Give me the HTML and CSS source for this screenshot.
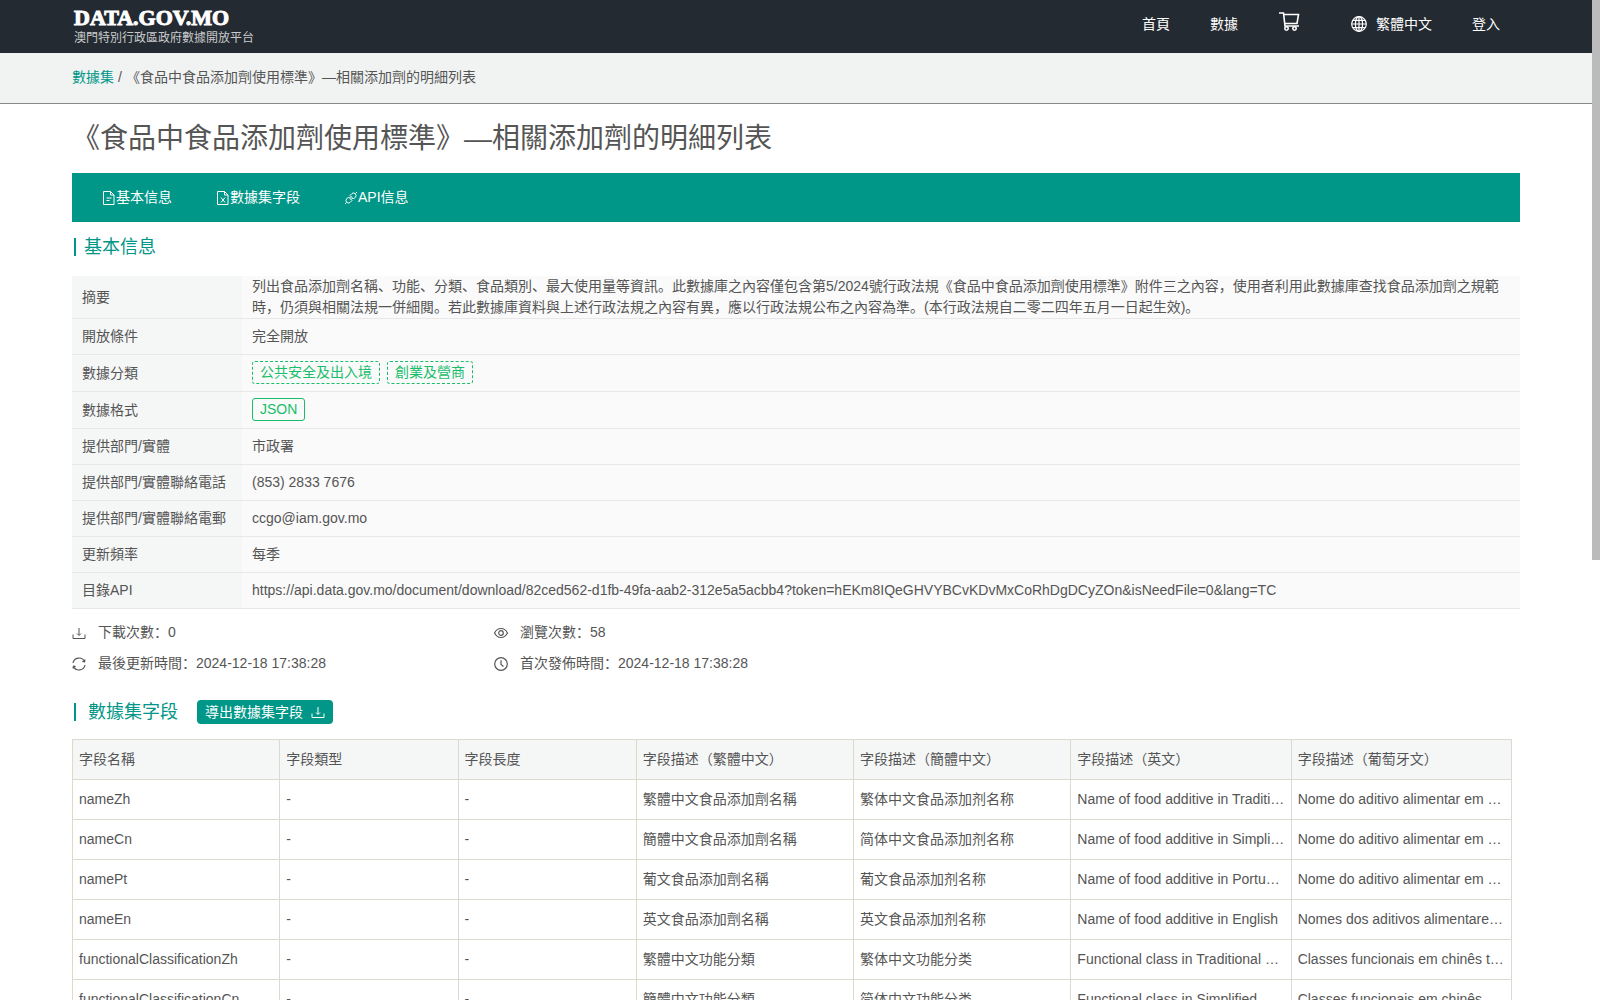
FILE: index.html
```
<!DOCTYPE html>
<html lang="zh">
<head>
    <meta charset="UTF-8">
    <meta name="viewport" content="width=device-width, initial-scale=1.0">
    <title>《食品中食品添加劑使用標準》—相關添加劑的明細列表</title>
    <link rel="stylesheet" href="styles.css">
</head>
<body>
    <header class="header">
        <a class="logo" href="#">
            <span class="logo-name">DATA.GOV.MO</span>
            <span class="logo-sub">澳門特別行政區政府數據開放平台</span>
        </a>
        <nav class="menu">
            <a href="#">首頁</a>
            <a href="#">數據</a>
            <a class="cart" href="#" aria-label="購物車">
                <svg width="24" height="24" viewBox="0 0 24 24" fill="none" stroke="currentColor" stroke-width="1.6">
                    <path d="M1 4h4.500l1.500 13h14M5.500 5.500h15l-1.500 9H6.800"/>
                    <circle cx="8.500" cy="19.500" r="1.700"/>
                    <circle cx="16.500" cy="19.500" r="1.700"/>
                </svg>
            </a>
            <a class="lang" href="#">
                <svg width="16" height="16" viewBox="0 0 16 16" fill="none" stroke="currentColor" stroke-width="1.2">
                    <circle cx="8" cy="8" r="7.300"/>
                    <ellipse cx="8" cy="8" rx="3.600" ry="7.300"/>
                    <path d="M8 .7v14.600M.7 8h14.600M1.800 4.300h12.400M1.800 11.700h12.400"/>
                </svg>
                繁體中文
            </a>
            <a href="#">登入</a>
        </nav>
    </header>

    <div class="breadcrumb">
        <a href="#">數據集</a>
        <span>/</span>
        <span>《食品中食品添加劑使用標準》—相關添加劑的明細列表</span>
    </div>

    <main class="container">
        <h1>《食品中食品添加劑使用標準》—相關添加劑的明細列表</h1>

        <nav class="tabs">
            <a href="#info">
                <svg width="14" height="14" viewBox="0 0 14 14" fill="none" stroke="currentColor">
                    <path d="M1.500 .5h7L12 4v9.500H1.500zM8.500.5V4H12M4.500 7h5M4.500 9.500h3"/>
                </svg>基本信息</a>
            <a href="#fields">
                <svg width="14" height="14" viewBox="0 0 14 14" fill="none" stroke="currentColor">
                    <path d="M1.500 .5h7L12 4v9.500H1.500zM8.500.5V4H12M5 6.500l4 5M9 6.500l-4 5"/>
                </svg>數據集字段</a>
            <a href="#api">
                <svg width="14" height="14" viewBox="0 0 14 14" fill="none" stroke="currentColor">
                    <path d="M6 4.500l2-2a2.500 2.500 0 0 1 3.500 3.500l-2 2zM4.500 6l3.500 3.500-2 2A2.500 2.500 0 0 1 2.500 8zM11.500 2.500l1.500-1.500M1 13l1.500-1.500M5.500 7l1.500-1.500M7 8.500L8.500 7"/>
                </svg>API信息</a>
        </nav>

        <h2 class="section-title" id="info">基本信息</h2>

        <table class="info">
            <tr>
                <th>摘要</th>
                <td>列出食品添加劑名稱、功能、分類、食品類別、最大使用量等資訊。此數據庫之內容僅包含第5/2024號行政法規《食品中食品添加劑使用標準》附件三之內容，使用者利用此數據庫查找食品添加劑之規範時，仍須與相關法規一併細閱。若此數據庫資料與上述行政法規之內容有異，應以行政法規公布之內容為準。(本行政法規自二零二四年五月一日起生效)。</td>
            </tr>
            <tr>
                <th>開放條件</th>
                <td>完全開放</td>
            </tr>
            <tr>
                <th>數據分類</th>
                <td>
                    <div class="tags">
                        <span class="tag dashed">公共安全及出入境</span>
                        <span class="tag dashed">創業及營商</span>
                    </div>
                </td>
            </tr>
            <tr>
                <th>數據格式</th>
                <td>
                    <div class="tags">
                        <span class="tag">JSON</span>
                    </div>
                </td>
            </tr>
            <tr>
                <th>提供部門/實體</th>
                <td>市政署</td>
            </tr>
            <tr>
                <th>提供部門/實體聯絡電話</th>
                <td>(853) 2833 7676</td>
            </tr>
            <tr>
                <th>提供部門/實體聯絡電郵</th>
                <td>ccgo@iam.gov.mo</td>
            </tr>
            <tr>
                <th>更新頻率</th>
                <td>每季</td>
            </tr>
            <tr>
                <th>目錄API</th>
                <td>https://api.data.gov.mo/document/download/82ced562-d1fb-49fa-aab2-312e5a5acbb4?token=hEKm8IQeGHVYBCvKDvMxCoRhDgDCyZOn&amp;isNeedFile=0&amp;lang=TC</td>
            </tr>
        </table>

        <div class="stats">
            <div class="stat">
                <svg width="14" height="14" viewBox="0 0 14 14" fill="none" stroke="currentColor">
                    <path d="M1 8.500v4h12v-4M7 2v7M5 7.500l2 2 2-2"/>
                </svg>
                <span>下載次數：0</span>
            </div>
            <div class="stat">
                <svg width="14" height="14" viewBox="0 0 14 14" fill="none" stroke="currentColor" stroke-width="1.2">
                    <path d="M.5 7C2 4 4.300 2.500 7 2.500S12 4 13.500 7C12 10 9.700 11.500 7 11.500S2 10 .5 7z"/>
                    <circle cx="7" cy="7" r="2.300"/>
                </svg>
                <span>瀏覽次數：58</span>
            </div>
            <div class="stat">
                <svg width="14" height="14" viewBox="0 0 14 14" fill="none" stroke="currentColor" stroke-width="1.2">
                    <path d="M1 6a6.100 6.100 0 0 1 11.500-1.500M13 8a6.100 6.100 0 0 1-11.500 1.500M13 2.500l-.5 2.300-2.200-.4M1 11.500l.5-2.300 2.200.4"/>
                </svg>
                <span>最後更新時間：2024-12-18 17:38:28</span>
            </div>
            <div class="stat">
                <svg width="14" height="14" viewBox="0 0 14 14" fill="none" stroke="currentColor" stroke-width="1.2">
                    <circle cx="7" cy="7" r="6.300"/>
                    <path d="M7 3.200v4.300l2.500 2"/>
                </svg>
                <span>首次發佈時間：2024-12-18 17:38:28</span>
            </div>
        </div>

        <div class="fields-head">
            <h2 class="section-title wide" id="fields">數據集字段</h2>
            <button class="export" type="button">
                導出數據集字段
                <svg width="14" height="14" viewBox="0 0 14 14" fill="none" stroke="currentColor">
                    <path d="M1 8.500v4h12v-4M7 2v7M5 7.500l2 2 2-2"/>
                </svg>
            </button>
        </div>

        <table class="fields">
            <colgroup>
                <col class="col-name">
                <col class="col-type">
                <col class="col-type">
                <col class="col-zh">
                <col class="col-zh">
                <col class="col-foreign">
                <col class="col-foreign">
            </colgroup>
            <thead>
                <tr>
                    <th>字段名稱</th>
                    <th>字段類型</th>
                    <th>字段長度</th>
                    <th>字段描述（繁體中文）</th>
                    <th>字段描述（簡體中文）</th>
                    <th>字段描述（英文）</th>
                    <th>字段描述（葡萄牙文）</th>
                </tr>
            </thead>
            <tbody>
                <tr>
                    <td>nameZh</td>
                    <td>-</td>
                    <td>-</td>
                    <td>繁體中文食品添加劑名稱</td>
                    <td>繁体中文食品添加剂名称</td>
                    <td>Name of food additive in Traditional Chinese</td>
                    <td>Nome do aditivo alimentar em chinês tradicional</td>
                </tr>
                <tr>
                    <td>nameCn</td>
                    <td>-</td>
                    <td>-</td>
                    <td>簡體中文食品添加劑名稱</td>
                    <td>简体中文食品添加剂名称</td>
                    <td>Name of food additive in Simplified Chinese</td>
                    <td>Nome do aditivo alimentar em chinês simplificado</td>
                </tr>
                <tr>
                    <td>namePt</td>
                    <td>-</td>
                    <td>-</td>
                    <td>葡文食品添加劑名稱</td>
                    <td>葡文食品添加剂名称</td>
                    <td>Name of food additive in Portuguese</td>
                    <td>Nome do aditivo alimentar em português</td>
                </tr>
                <tr>
                    <td>nameEn</td>
                    <td>-</td>
                    <td>-</td>
                    <td>英文食品添加劑名稱</td>
                    <td>英文食品添加剂名称</td>
                    <td>Name of food additive in English</td>
                    <td>Nomes dos aditivos alimentares em inglês</td>
                </tr>
                <tr>
                    <td>functionalClassificationZh</td>
                    <td>-</td>
                    <td>-</td>
                    <td>繁體中文功能分類</td>
                    <td>繁体中文功能分类</td>
                    <td>Functional class in Traditional Chinese</td>
                    <td>Classes funcionais em chinês tradicional</td>
                </tr>
                <tr>
                    <td>functionalClassificationCn</td>
                    <td>-</td>
                    <td>-</td>
                    <td>簡體中文功能分類</td>
                    <td>简体中文功能分类</td>
                    <td>Functional class in Simplified Chinese</td>
                    <td>Classes funcionais em chinês simplificado</td>
                </tr>
            </tbody>
        </table>
    </main>

    <div class="scrollbar"></div>
</body>
</html>
```

FILE: styles.css
```
* {
    box-sizing: border-box;
}
body {
    margin: 0;
    padding-right: 8px;
    height: 100vh;
    overflow: hidden;
    font-family: "Liberation Sans", "Noto Sans CJK SC", sans-serif;
    font-size: 14px;
    line-height: 21px;
    color: #555;
    background-color: #fff;
    text-spacing-trim: space-all;
}
a {
    color: inherit;
    text-decoration: none;
}
svg {
    flex-shrink: 0;
}

/* header */
.header {
    display: flex;
    justify-content: space-between;
    height: 53px;
    margin-right: -8px;
    padding: 0 80px 0 72px;
    background-color: #242a32;
    color: #fff;
}
.logo {
    display: flex;
    flex-direction: column;
    padding: 8px 2px 0;
}
.logo-name {
    font-family: "Liberation Serif", serif;
    font-size: 22px;
    font-weight: bold;
    line-height: 20px;
    -webkit-text-stroke: 1px #fff;
}
.logo-sub {
    font-size: 12px;
    line-height: 20px;
    color: #c8cacc;
}
.menu {
    display: flex;
    height: 48px;
}
.menu a {
    display: flex;
    align-items: center;
    padding: 0 20px;
}
.menu .cart {
    padding-right: 29px;
    padding-bottom: 6px;
}
.menu .lang {
    gap: 9px;
}

.breadcrumb {
    display: flex;
    gap: 4px;
    height: 51px;
    padding: 14px 72px;
    background-color: #f1f3f3;
    border-bottom: 1px solid #888;
}
.breadcrumb a {
    color: #009688;
}

.container {
    padding: 0 72px;
}
h1 {
    margin: 0;
    padding: 14px 0;
    font-size: 28px;
    font-weight: normal;
    line-height: 41px;
}

/* tabs */
.tabs {
    display: flex;
    height: 49px;
    padding: 0 8px;
    background-color: #009688;
    color: #fff;
}
.tabs a {
    display: flex;
    align-items: center;
    padding: 0 22px;
}

.section-title {
    margin: 16px 2px 20px;
    padding-left: 8px;
    border-left: 2px solid #009688;
    font-size: 18px;
    font-weight: normal;
    line-height: 18px;
    color: #009688;
}
.section-title.wide {
    margin: 0 2px;
    padding-left: 12px;
}

/* basic info */
.info {
    width: 100%;
    border-collapse: separate;
    border-spacing: 0;
    background-color: #fafafa;
}
.info th,
.info td {
    height: 36px;
    padding: 0 10px;
    border-bottom: 1px solid #e8e8e8;
    text-align: left;
    font-weight: normal;
}
.info th {
    width: 170px;
    background-color: #f5f7f7;
    white-space: nowrap;
}
.tags {
    display: flex;
    gap: 7px;
    padding: 6px 0 7px;
}
.tag {
    padding: 0 7px;
    border: 1px solid #19be6b;
    border-radius: 3px;
    line-height: 21px;
    color: #19be6b;
}
.tag.dashed {
    border-style: dashed;
}

.stats {
    display: grid;
    grid-template-columns: 422px 1fr;
    row-gap: 10px;
    padding: 13px 0 26px;
}
.stat {
    display: flex;
    align-items: center;
    gap: 12px;
}

/* dataset fields */
.fields-head {
    display: flex;
    align-items: center;
    gap: 17px;
    margin-bottom: 15px;
}
.export {
    display: flex;
    align-items: center;
    gap: 8px;
    height: 24px;
    padding: 0 8px;
    border: none;
    border-radius: 4px;
    background-color: #009688;
    color: #fff;
    font: inherit;
    cursor: pointer;
}
.fields {
    width: calc(100% - 8px);
    table-layout: fixed;
    border-collapse: collapse;
}
.fields th,
.fields td {
    height: 40px;
    padding: 0 6px;
    border: 1px solid #dadbcc;
    text-align: left;
    font-weight: normal;
    white-space: nowrap;
    overflow: hidden;
    text-overflow: ellipsis;
}
.fields th {
    background-color: #f5f7f7;
}
.col-name {
    width: 207px;
}
.col-type {
    width: 178px;
}
.col-zh {
    width: 217px;
}
.col-foreign {
    width: 220px;
}

.scrollbar {
    position: fixed;
    top: 0;
    right: 0;
    width: 8px;
    height: 56vh;
    background-color: #bbb;
}
```
